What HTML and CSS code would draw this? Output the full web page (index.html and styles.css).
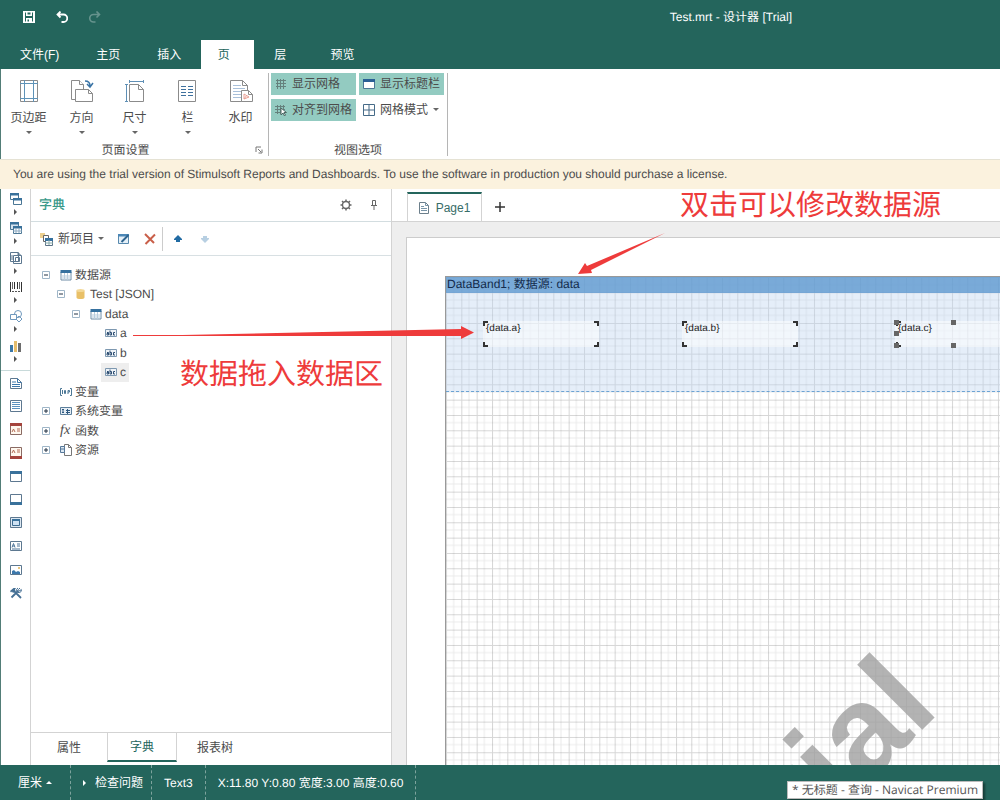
FILE: index.html
```html
<!DOCTYPE html>
<html lang="zh-CN">
<head>
<meta charset="utf-8">
<title>Test.mrt - 设计器 [Trial]</title>
<link rel="stylesheet" href="styles.css">
</head>
<body>
<svg class="defs" width="0" height="0" aria-hidden="true">
  <defs>
    <symbol id="table" viewBox="0 0 12 12"><path d="M1 3h10v8H1z" fill="#fff" stroke="#6f8ca5"/><path d="M.5 1h11v3H.5z" fill="#36719f"/><path d="M1 7h10M1 9h10M4.500 4v7M7.500 4v7" stroke="#b9cddd" fill="none"/></symbol>
    <symbol id="minus" viewBox="0 0 8 8"><path d="M.5.5h7v7h-7z" fill="#fff" stroke="#9fb6c8"/><path d="M2 4h4" stroke="#234" /></symbol>
    <symbol id="plus" viewBox="0 0 8 8"><path d="M.5.5h7v7h-7z" fill="#fff" stroke="#9fb6c8"/><path d="M2 4h4M4 2v4" stroke="#234"/></symbol>
    <symbol id="abc" viewBox="0 0 12 8"><path d="M.5.5h11v7H.5z" fill="#eef3f8" stroke="#7d98b0"/><path d="M2 3.500h1.500v2.500H2V4.500h1.500M5 1.500V6h1.500V3.500H5M10 3.500H8.500V6H10" fill="none" stroke="#2e4f73"/></symbol>
    <symbol id="caret" viewBox="0 0 6 4"><path d="M0 0h6L3 3z" fill="currentColor"/></symbol>
    <symbol id="next" viewBox="0 0 4 6"><path d="M0 0v6l3-3z" fill="currentColor"/></symbol>
  </defs>
</svg>
<div class="app">
  <header class="titlebar">
    <div class="quick">
      <button aria-label="保存"><svg width="12" height="12" viewBox="0 0 12 12"><path fill-rule="evenodd" d="M0 0h12v12H0zM2 1.500h1v3.500h6V1.500h1v9H9V7H3v3.500H2zM4.500 1.500h3v2h-3zM4.500 8.500h1.500v2H4.500z" fill="#fff"/></svg></button>
      <button aria-label="撤销"><svg width="12" height="12" viewBox="0 0 12 12"><path d="M4.500 0.500L1.500 3.500l3 3M2 3.500h5.500a3.700 3.700 0 010 7.500H5.500" fill="none" stroke="#fff" stroke-width="1.800"/></svg></button>
      <button aria-label="重做" class="dim"><svg width="12" height="12" viewBox="0 0 12 12"><path d="M7.500 0.500l3 3-3 3M10 3.500H4.500a3.700 3.700 0 000 7.500H6.500" fill="none" stroke="#fff" stroke-width="1.600"/></svg></button>
    </div>
    <h1>Test.mrt - 设计器 [Trial]</h1>
  </header>
  <nav class="tabs">
    <button>文件(F)</button><button>主页</button><button>插入</button><button class="active">页</button><button>层</button><button>预览</button>
  </nav>
  <section class="ribbon">
    <div class="group">
      <div class="bigs">
        <button class="big"><svg width="24" height="26" viewBox="0 0 24 26"><path d="M3.500 2.500h17v21h-17z" fill="#fff" stroke="#8b8b8b"/><path d="M7.500 2v22M16.500 2v22M3 5.500h18M3 20.500h18" fill="none" stroke="#5f93b8"/></svg><span>页边距</span><svg class="caret" width="6" height="4"><use href="#caret"/></svg></button>
        <button class="big"><svg width="24" height="26" viewBox="0 0 24 26"><path d="M1.500 2.500h8l4 4v15h-12z" fill="#fff" stroke="#8b8b8b"/><path d="M9.500 2.500v4h4M5.500 11.500h13l4 4v8h-17z" fill="#fff" stroke="#8b8b8b"/><path d="M18.500 11.500v4h4" fill="none" stroke="#8b8b8b"/><path d="M15 3c4 0 5 2 5 5M17 6l3 3 3-4" fill="none" stroke="#3973a5" stroke-width="1.500"/></svg><span>方向</span><svg class="caret" width="6" height="4"><use href="#caret"/></svg></button>
        <button class="big"><svg width="24" height="26" viewBox="0 0 24 26"><path d="M6.500 6.500h9l5 5v12h-14z" fill="#fff" stroke="#8b8b8b"/><path d="M15.500 6.500v5h5" fill="none" stroke="#8b8b8b"/><path d="M3.500 6v18M2 6.500h3M2 23.500h3M6 3.500h15M6.500 2v3M20.500 2v3" fill="none" stroke="#5f8fb5"/></svg><span>尺寸</span><svg class="caret" width="6" height="4"><use href="#caret"/></svg></button>
        <button class="big"><svg width="24" height="26" viewBox="0 0 24 26"><path d="M2.500 2.500h17v21h-17z" fill="#fff" stroke="#8b8b8b"/><path d="M5 8.500h5M12 8.500h5M5 11.500h5M12 11.500h5M5 14.500h5M12 14.500h5M5 17.500h5M12 17.500h5" stroke="#3f719e"/></svg><span>栏</span><svg class="caret" width="6" height="4"><use href="#caret"/></svg></button>
        <button class="big"><svg width="24" height="26" viewBox="0 0 24 26"><path d="M1.500 2.500h12l5 5v16h-17z" fill="#fff" stroke="#8b8b8b"/><path d="M13.500 2.500v5h5" fill="none" stroke="#8b8b8b"/><path d="M4 7.500h8M4 10.500h12M4 13.500h8M4 16.500h8M4 19.500h8" stroke="#a9c0da"/><path d="M12.500 12.500h7l4 4v7h-11z" fill="#fff" stroke="#8b8b8b"/><path d="M19.500 12.500v4h4" fill="none" stroke="#8b8b8b"/><path d="M15 16l5 3-5 2zM15 21l3-4" fill="none" stroke="#e8a095"/></svg><span>水印</span></button>
      </div>
      <div class="group-foot"><span>页面设置</span><button aria-label="页面设置对话框"><svg width="8" height="8" viewBox="0 0 8 8"><path d="M1 6V1h5M3 3l3 3M7 3.500V7H3.500" fill="none" stroke="#777"/></svg></button></div>
    </div>
    <div class="group">
      <div class="smalls">
        <button class="on" aria-pressed="true"><svg width="12" height="12" viewBox="0 0 12 12"><path d="M1 2.500h10M1 5.500h10M1 8.500h10M2.500 1v10M5.500 1v10M8.500 1v10" stroke="#65817d" fill="none"/></svg>显示网格</button>
        <button class="on" aria-pressed="true"><svg width="12" height="12" viewBox="0 0 12 12"><path d="M.5 1.500h11v9H.5z" fill="#fff" stroke="#4b7795"/><path d="M0 1h12v3H0z" fill="#2a6095"/></svg>显示标题栏</button>
        <button class="on" aria-pressed="true"><svg width="12" height="12" viewBox="0 0 12 12"><path d="M0 2.500h10M0 5.500h10M0 8.500h6M2.500 1v9M5.500 1v9M8.500 1v4" stroke="#65817d" fill="none"/><path d="M6 4v7l2-2 1.500 3 1-1L9 8.500h2.500z" fill="#fff" stroke="#4c6663"/></svg>对齐到网格</button>
        <button><svg width="12" height="12" viewBox="0 0 12 12"><path d="M.5.5h11v11H.5zM6 .5v11M.5 6h11" fill="none" stroke="#466b88"/></svg>网格模式<svg class="caret" width="6" height="4"><use href="#caret"/></svg></button>
      </div>
      <div class="group-foot"><span>视图选项</span></div>
    </div>
  </section>
  <p class="notice">You are using the trial version of Stimulsoft Reports and Dashboards. To use the software in production you should purchase a license.</p>
  <main class="work">
    <aside class="tools">
      <div class="tools-a">
        <button aria-label="区域"><svg width="14" height="14" viewBox="0 0 14 14"><path d="M1.500 1.500h8v6h-8zM4.500 6.500h8v6h-8z" fill="#fff" stroke="#4b7795"/><path d="M1 1h9v2.500H1zM4 6h9v2.500H4z" fill="#39719b"/></svg><svg width="4" height="6"><use href="#next"/></svg></button>
        <button aria-label="交叉区域"><svg width="14" height="14" viewBox="0 0 14 14"><path d="M1.500 1.500h8v7h-8z" fill="#d5e3f0" stroke="#4b7795"/><path d="M1 1h9v2.500H1z" fill="#39719b"/><path d="M4.500 5.500h8v7h-8z" fill="#fff" stroke="#4b7795"/><path d="M4 5h9v2.500H4z" fill="#39719b"/><path d="M4 10h9M7 7v5M10 7v5" stroke="#8eabc2"/></svg><svg width="4" height="6"><use href="#next"/></svg></button>
        <button aria-label="组件"><svg width="14" height="14" viewBox="0 0 14 14"><path d="M1.500 1.500h8v9h-8zM4.500 4.500h8v8h-8z" fill="#fff" stroke="#5d7890"/><path d="M3 4v5M6.500 6.500h4v4h-4zM8 3h3v2" fill="none" stroke="#5d7890"/></svg><svg width="4" height="6"><use href="#next"/></svg></button>
        <button aria-label="条形码"><svg width="14" height="14" viewBox="0 0 14 14"><path d="M1.500 2v10M5.500 2v7M8.500 2v7M12.500 2v10" stroke="#333"/><path d="M3.500 2v7M10.500 2v7" stroke="#666"/><path d="M3 11.500h2M6 11.500h2M9 11.500h2" stroke="#555"/></svg><svg width="4" height="6"><use href="#next"/></svg></button>
        <button aria-label="形状"><svg width="14" height="14" viewBox="0 0 14 14"><circle cx="9" cy="5" r="3.500" fill="#fff" stroke="#6f98bd"/><path d="M1.500 5.500h6v5h-6z" fill="#fff" stroke="#6f98bd"/><path d="M10 7l3 3-3 3-3-3z" fill="none" stroke="#6f98bd"/></svg><svg width="4" height="6"><use href="#next"/></svg></button>
        <button aria-label="图表"><svg width="14" height="14" viewBox="0 0 14 14"><path d="M1 6h3v7H1z" fill="#3b77a8"/><path d="M5 2h3v11H5z" fill="#e5bd6d"/><path d="M9 4h3v9H9z" fill="#6d6d6d"/></svg><svg width="4" height="6"><use href="#next"/></svg></button>
      </div>
      <div class="tools-b">
        <button aria-label="报表标题"><svg width="12" height="12" viewBox="0 0 12 12"><path d="M.5 1.500h7l4 4v6H.5z" fill="#fff" stroke="#5d7890"/><path d="M7.500 1.500v4h4M2 5h4M2 7.500h8M2 9.500h8" fill="none" stroke="#3c78ac"/></svg></button>
        <button aria-label="数据"><svg width="12" height="12" viewBox="0 0 12 12"><path d="M.5.5h11v11H.5z" fill="#fff" stroke="#5d7890"/><path d="M2 2.500h8M2 4.500h8M2 6.500h8M2 8.500h8" stroke="#5b92c0"/></svg></button>
        <button aria-label="页眉"><svg width="12" height="12" viewBox="0 0 12 12"><path d="M.5.5h11v11H.5z" fill="#fff8ef" stroke="#8a6a63"/><path d="M0 0h12v3H0z" fill="#a5443d"/><path d="M2 9l1.500-3L5 9M7 6h3M7 8h3" fill="none" stroke="#b36b55"/></svg></button>
        <button aria-label="页脚"><svg width="12" height="12" viewBox="0 0 12 12"><path d="M.5.5h11v11H.5z" fill="#fff8ef" stroke="#8a6a63"/><path d="M0 9h12v3H0z" fill="#a5443d"/><path d="M2 6l1.500-3L5 6M7 3h3M7 5h3" fill="none" stroke="#b36b55"/></svg></button>
        <button aria-label="标题区"><svg width="12" height="12" viewBox="0 0 12 12"><path d="M.5 1.500h11v10H.5z" fill="#fff" stroke="#5d7890"/><path d="M0 1h12v3H0z" fill="#39719b"/></svg></button>
        <button aria-label="页脚区"><svg width="12" height="12" viewBox="0 0 12 12"><path d="M.5 .5h11v10H.5z" fill="#fff" stroke="#5d7890"/><path d="M0 8h12v3H0z" fill="#39719b"/></svg></button>
        <button aria-label="面板"><svg width="12" height="12" viewBox="0 0 12 12"><path d="M.5.5h11v10H.5z" fill="#dde8f2" stroke="#5d7890"/><path d="M2.500 2.500h7v6h-7z" fill="#cfe2f3" stroke="#3d6c92"/><path d="M2 2h8v2H2z" fill="#39719b"/></svg></button>
        <button aria-label="文本"><svg width="12" height="12" viewBox="0 0 12 12"><path d="M.5 1.500h11v9H.5z" fill="#fff" stroke="#5d7890"/><path d="M2 7.500l1.500-4L5 7.500M2.500 6h2M7 4h3M7 6h3M2 9h8" fill="none" stroke="#4d7599"/></svg></button>
        <button aria-label="图像"><svg width="12" height="12" viewBox="0 0 12 12"><path d="M.5 1.500h11v9H.5z" fill="#fff" stroke="#5d7890"/><path d="M2 10V7l2-1 2 2 2-1 2 1v2z" fill="#3c78ac"/><circle cx="9" cy="4" r="1" fill="#e0b150"/></svg></button>
        <button aria-label="设置工具箱"><svg width="12" height="12" viewBox="0 0 12 12"><path d="M1.500 10.500l7-7M4 4l7 7" stroke="#456f94" stroke-width="1.800"/><path d="M0 4l3.500-3H6L5 2.500 5.500 4 3 6 2 4.500 1 5.500z" fill="#456f94"/><path d="M10 1L8.500 2.500l1 1.500L11.300 2.500A2.400 2.400 0 118 1" fill="none" stroke="#456f94"/></svg></button>
      </div>
    </aside>
    <section class="dict">
      <header class="dict-head"><h2>字典</h2>
        <button aria-label="设置"><svg width="12" height="12" viewBox="0 0 12 12"><circle cx="6" cy="6" r="3.500" fill="none" stroke="#666" stroke-width="1.400"/><path d="M6 .5v2M6 9.500v2M.5 6h2M9.500 6h2M2 2l1.500 1.500M8.500 8.500L10 10M10 2L8.500 3.500M3.500 8.500L2 10" stroke="#666" stroke-width="1.500"/></svg></button>
        <button aria-label="固定"><svg width="8" height="10" viewBox="0 0 8 10"><path d="M2.500 5.500v-5h3v5M1 5.500h6M4 6v4" fill="none" stroke="#666"/></svg></button>
      </header>
      <div class="dict-tools">
        <button class="new"><svg width="14" height="14" viewBox="0 0 14 14"><path d="M0 1h5v5H0z" fill="#edcf8d"/><path d="M3.500 3.500h5v6h-5z" fill="#fff" stroke="#666"/><path d="M5.500 6.500h7v7h-7z" fill="#fff" stroke="#5b7286"/><path d="M5 6h8v3H5z" fill="#36719f"/><path d="M5 11h8M9 8v5" stroke="#8aa"/></svg>新项目<svg class="caret" width="6" height="4"><use href="#caret"/></svg></button>
        <button aria-label="编辑"><svg width="12" height="12" viewBox="0 0 12 12"><path d="M.5 1.500h10v9H.5z" fill="#e5f0f8" stroke="#5789ae"/><path d="M0 1h11v2.500H0z" fill="#4b87b6"/><path d="M3.500 9L10.500 2" stroke="#2f648e" stroke-width="2"/></svg></button>
        <button aria-label="删除"><svg width="12" height="12" viewBox="0 0 12 12"><path d="M1 1l9 9M11 1.500L1.500 11" stroke="#c95f49" stroke-width="2"/></svg></button>
        <i class="rule"></i>
        <button aria-label="上移"><svg width="8" height="8" viewBox="0 0 8 8"><path d="M4 0l4 4v1H6v2H2V5H0V4z" fill="#216ba3"/></svg></button>
        <button aria-label="下移"><svg width="8" height="8" viewBox="0 0 8 8"><path d="M2 1h4v2h2v1L4 8 0 4V3h2z" fill="#b7cfe2"/></svg></button>
      </div>
      <ul class="tree">
        <li><button aria-label="折叠"><svg width="8" height="8"><use href="#minus"/></svg></button><svg width="12" height="12"><use href="#table"/></svg><span>数据源</span></li>
        <li class="l1"><button aria-label="折叠"><svg width="8" height="8"><use href="#minus"/></svg></button><svg width="12" height="12" viewBox="0 0 12 12"><path d="M1.500 2.500v7c0 2 8 2 8 0v-7z" fill="#e9c067"/><ellipse cx="5.500" cy="2.500" rx="4" ry="1.500" fill="#f3d896"/></svg><span>Test [JSON]</span></li>
        <li class="l2"><button aria-label="折叠"><svg width="8" height="8"><use href="#minus"/></svg></button><svg width="12" height="12"><use href="#table"/></svg><span>data</span></li>
        <li class="l3"><svg width="12" height="8"><use href="#abc"/></svg><span>a</span></li>
        <li class="l3"><svg width="12" height="8"><use href="#abc"/></svg><span>b</span></li>
        <li class="l3 selected"><svg width="12" height="8"><use href="#abc"/></svg><span>c</span></li>
        <li class="leaf"><svg width="12" height="8" viewBox="0 0 12 8"><path d="M2 .5H.5v7H2M10 .5h1.500v7H10M2.500 2v4M4.500 2.500v3h1v-3zM8 6V2.500h1.500V4H8" fill="none" stroke="#4b7795"/></svg><span>变量</span></li>
        <li><button aria-label="展开"><svg width="8" height="8"><use href="#plus"/></svg></button><svg width="12" height="8" viewBox="0 0 12 8"><path d="M.5.5h11v7H.5z" fill="#e6eef5" stroke="#5b7e9b"/><path d="M2 2.500h2M3 2v4M2 5.500h2M6 3.500h4M6 5.500h4M7.500 2v5" stroke="#2e5980"/></svg><span>系统变量</span></li>
        <li><button aria-label="展开"><svg width="8" height="8"><use href="#plus"/></svg></button><i class="fx">fx</i><span>函数</span></li>
        <li><button aria-label="展开"><svg width="8" height="8"><use href="#plus"/></svg></button><svg width="12" height="12" viewBox="0 0 12 12"><path d="M4.500.5h4l3 3v8h-7z" fill="#fff" stroke="#777"/><path d="M8.500.5v3h3" fill="none" stroke="#777"/><path d="M.5 2.500h4v6h-4z" fill="#dce8f2" stroke="#56789a"/><path d="M1 5h3" stroke="#56789a"/></svg><span>资源</span></li>
      </ul>
      <nav class="dict-tabs"><button>属性</button><button class="active">字典</button><button>报表树</button></nav>
    </section>
    <section class="designer">
      <nav class="pages"><button class="page-tab"><svg width="10" height="12" viewBox="0 0 10 12"><path d="M.5.5h6l3 3v8h-9z" fill="#fff" stroke="#6c7f8b"/><path d="M6.500.5v3h3M2 4.500h3M2 6.500h6M2 8.500h6" fill="none" stroke="#7895a8"/></svg>Page1</button><button class="add" aria-label="新建页"><svg width="10" height="10" viewBox="0 0 10 10"><path d="M5 0v10M0 5h10" stroke="#333" stroke-width="1.500"/></svg></button></nav>
      <div class="desk">
        <div class="sheet">
          <div class="report">
            <svg class="grid" width="100%" height="100%" aria-hidden="true">
              <defs><pattern id="cells" width="46" height="46" patternUnits="userSpaceOnUse" patternTransform="scale(.3333)">
                <path d="M23 0v46M0 23h46" stroke="#000" stroke-opacity=".08" stroke-width="3"/>
                <path d="M1.500 0v46M0 1.500h46" stroke="#000" stroke-opacity=".16" stroke-width="3"/>
              </pattern></defs>
              <rect width="100%" height="100%" fill="url(#cells)"/>
              <text class="watermark" transform="translate(495 434) rotate(-45)" text-anchor="end">Trial</text>
            </svg>
            <div class="band">
              <div class="band-title">DataBand1; 数据源: data</div>
              <div class="band-body">
                <div class="comp comp-a">{data.a}<svg viewBox="0 0 116 26"><path d="M1 5V1h4M111 1h4v4M1 21v4h4M111 25h4v-4"/></svg></div>
                <div class="comp comp-b">{data.b}<svg viewBox="0 0 116 26"><path d="M1 5V1h4M111 1h4v4M1 21v4h4M111 25h4v-4"/></svg></div>
                <div class="comp comp-c">{data.c}<svg viewBox="0 0 116 26"><path d="M2 5V1h4M2 21v4h4"/><path class="handles" d="M-1-1h5v5h-5zM-1 10h5v5h-5zM-1 22h5v5h-5zM56-1h5v5h-5zM56 22h5v5h-5z"/></svg></div>
              </div>
            </div>
          </div>
        </div>
      </div>
    </section>
  </main>
  <footer class="status">
    <button>厘米<svg width="6" height="4" viewBox="0 0 6 4"><path d="M0 3h6L3 0z" fill="#fff"/></svg></button>
    <button class="check"><svg width="4" height="6"><use href="#next"/></svg>检查问题</button>
    <span>Text3</span>
    <span>X:11.80 Y:0.80 宽度:3.00 高度:0.60</span>
  </footer>
  <div class="tip" role="tooltip">* 无标题 - 查询 - Navicat Premium</div>
  <svg class="arrows" width="1000" height="400" viewBox="0 0 1000 400" aria-hidden="true"><path d="M133 336L461 329v-3l13 6.500-13 6.500v-3L133 336zM133 335h60v1h-60zM665 233L587 266l-2-3-7 11 14-1-1-3z" fill="#ee3b3b"/></svg>
  <div class="note note-drag">数据拖入数据区</div>
  <div class="note note-source">双击可以修改数据源</div>
</div>
</body>
</html>
```
FILE: styles.css
```css
* { box-sizing: border-box; }
body { margin: 0; font: 12px/16px "Liberation Sans", "Noto Sans CJK SC", sans-serif; color: #4c4c4c; text-rendering: geometricPrecision; }
button { margin: 0; padding: 0; border: 0; background: none; color: inherit; font: inherit; display: flex; align-items: center; justify-content: center; white-space: nowrap; }
svg { flex: none; display: block; }
h1, h2, p, ul { margin: 0; padding: 0; font-size: 12px; font-weight: normal; }
.defs { position: absolute; }
.app { position: relative; height: 100vh; display: flex; flex-direction: column; overflow: hidden; background: #fff; }

.titlebar { display: grid; grid-template-columns: 1fr auto 208px; align-items: center; height: 34px; background: #24655c; color: #fff; }
.quick { display: flex; gap: 21px; padding-left: 23px; }
.dim { opacity: .3; }
.tabs { display: flex; height: 35px; padding: 6px 0 0 1px; background: #24655c; color: #fff; }
.tabs button { padding: 0 20px; }
.tabs button:first-child { padding-left: 19px; padding-right: 17px; }
.tabs button:nth-child(3) { padding-left: 17px; }
.tabs button:last-child { padding-left: 24px; }
.tabs .active { width: 53px; padding: 0 8px 0 0; background: #fff; color: #24655c; }

.ribbon { display: flex; height: 90px; padding: 4px 0 3px 0; border-left: 1px solid #527d77; }
.group { display: flex; flex-direction: column; justify-content: space-between; border-right: 1px solid #b5b5b5; }
.bigs { display: flex; padding: 5px 1px 0; }
.big { width: 53px; flex-direction: column; justify-content: flex-start; }
.big span { margin: 6px 0 5px; }
.caret { color: #666; }
.group-foot { display: flex; align-items: center; justify-content: center; height: 12px; }
.group-foot span { flex: 1; text-align: center; }
.group-foot button { width: 18px; height: 12px; }
.smalls { display: grid; grid-template-columns: 85px 85px; grid-auto-rows: 22px; gap: 4px 3px; padding: 0 3px 0 2px; }
.smalls button { justify-content: flex-start; gap: 5px; padding-left: 4px; }
.smalls .on { background: #93cbc1; }

.notice { height: 30px; padding: 6px 13px; border: solid #e5e2d4; border-width: 1px 0 0; background: #fbf2de; white-space: nowrap; }

.work { flex: 1; min-height: 0; display: flex; border-left: 1px solid #527d77; }
.tools { width: 30px; border-right: 1px solid #d3d3d3; }
.tools-a { display: grid; grid-template-rows: repeat(6, 1fr); height: 182px; padding: 3px 0 2px; border-bottom: 1px solid #c8dada; }
.tools-a button { width: 100%; flex-direction: column; justify-content: flex-start; gap: 3px; color: #555; }
.tools-b { display: grid; grid-template-rows: repeat(10, 1fr); height: 234px; }
.dict { width: 361px; display: flex; flex-direction: column; border-right: 1px solid #d3d3d3; }
.dict-head { display: flex; align-items: center; gap: 18px; height: 33px; padding: 0 13px 0 8px; border-bottom: 1px solid #d3dde0; }
.dict-head h2 { flex: 1; color: #399989; font-size: 13px; font-weight: 500; }
.dict-tools { display: flex; align-items: center; height: 34px; padding-left: 9px; gap: 14px; border-bottom: 1px solid #d8e0e3; }
.new { gap: 4px; }
.rule { width: 1px; height: 24px; margin: 0 -3px 0 -8px; background: #ccc; }
.dict-tools .rule + button { margin-right: 5px; }
.tree { display: grid; grid-template-rows: repeat(10, 1fr); height: 204px; padding: 9px 0 0 11px; list-style: none; }
.tree li { display: flex; align-items: center; justify-self: start; }
.tree li > button { margin-right: 10px; }
.tree span { margin-left: 3px; }
.tree .l1 { margin-left: 15px; }
.tree .l2 { margin-left: 30px; }
.tree .l3 { margin-left: 59px; padding: 0 3px 0 4px; }
.tree .leaf { margin-left: 18px; }
.selected { background: #eee; }
.fx { width: 12px; font: italic 14px/16px "Liberation Serif", serif; }
.dict-tabs { display: flex; height: 33px; margin-top: auto; padding-bottom: 3px; border-top: 1px solid #d3d3d3; }
.dict-tabs button { width: 76px; }
.dict-tabs .active { width: 70px; border: solid #d3d3d3; border-width: 0 1px; border-bottom: 2px solid #24655c; color: #24655c; }

.designer { flex: 1; min-width: 0; display: flex; flex-direction: column; }
.pages { display: flex; height: 33px; padding: 3px 0 0 15px; border-bottom: 1px solid #d3d3d3; }
.page-tab { width: 75px; gap: 7px; border: solid #d3d3d3; border-width: 0 1px; border-top: 2px solid #24655c; color: #376d68; }
.add { width: 36px; }
.desk { flex: 1; min-height: 0; padding: 15px 0 0 14px; background: #eee; display: flex; }
.sheet { flex: 1; display: flex; padding: 38px 0 0 38px; border: solid #ccc; border-width: 1px 0 0 1px; background: #fff; }
.report { position: relative; flex: 1; overflow: hidden; border: solid #999; border-width: 1px 0 0 1px; }
.grid { position: absolute; top: 0; left: 0; }
.watermark { font: bold 127px "Liberation Sans", sans-serif; fill: rgba(160, 160, 160, .8); }
.band { position: relative; border-bottom: 1px dashed #6ca3d3; background: rgba(190, 212, 240, .4); }
.band-title { height: 16px; background: rgba(94, 152, 208, .8); color: #142c4c; padding-left: 1px; line-height: 15px; }
.band-body { position: relative; height: 98px; }
.comp { position: absolute; top: 28px; width: 116px; height: 26px; padding: 1px 3px; background: rgba(255, 255, 255, .5); color: #222; font-size: 10px; line-height: 14px; }
.comp svg { position: absolute; top: 0; left: 0; width: 116px; height: 26px; overflow: visible; fill: none; stroke: #333; stroke-width: 2; }
.comp .handles { fill: #666; stroke: none; }
.comp-a { left: 37px; }
.comp-b { left: 236px; }
.comp-c { left: 449px; }

.status { display: flex; height: 35px; background: #24655c; color: #fff; }
.status > * { display: flex; align-items: center; gap: 4px; padding: 0 12px; border-right: 1px dashed #7da39d; white-space: nowrap; }
.status > :first-child { padding: 0 18px; }
.status .check { gap: 8px; padding: 0 8px 0 12px; }
.tip { position: absolute; right: 17px; bottom: 1px; height: 18px; padding: 0 4px; border: 1px solid #bbb; background: #fff; color: #555; font: 12px/16px "Open Sans", "Noto Sans CJK SC", sans-serif; box-shadow: 2px 2px 2px rgba(0, 0, 0, .4); }
.arrows { position: absolute; top: 0; left: 0; pointer-events: none; }
.note { position: absolute; color: #ee3b3b; font-size: 29px; line-height: 36px; white-space: nowrap; }
.note-drag { top: 357px; left: 180px; }
.note-source { top: 188px; left: 680px; }
```
